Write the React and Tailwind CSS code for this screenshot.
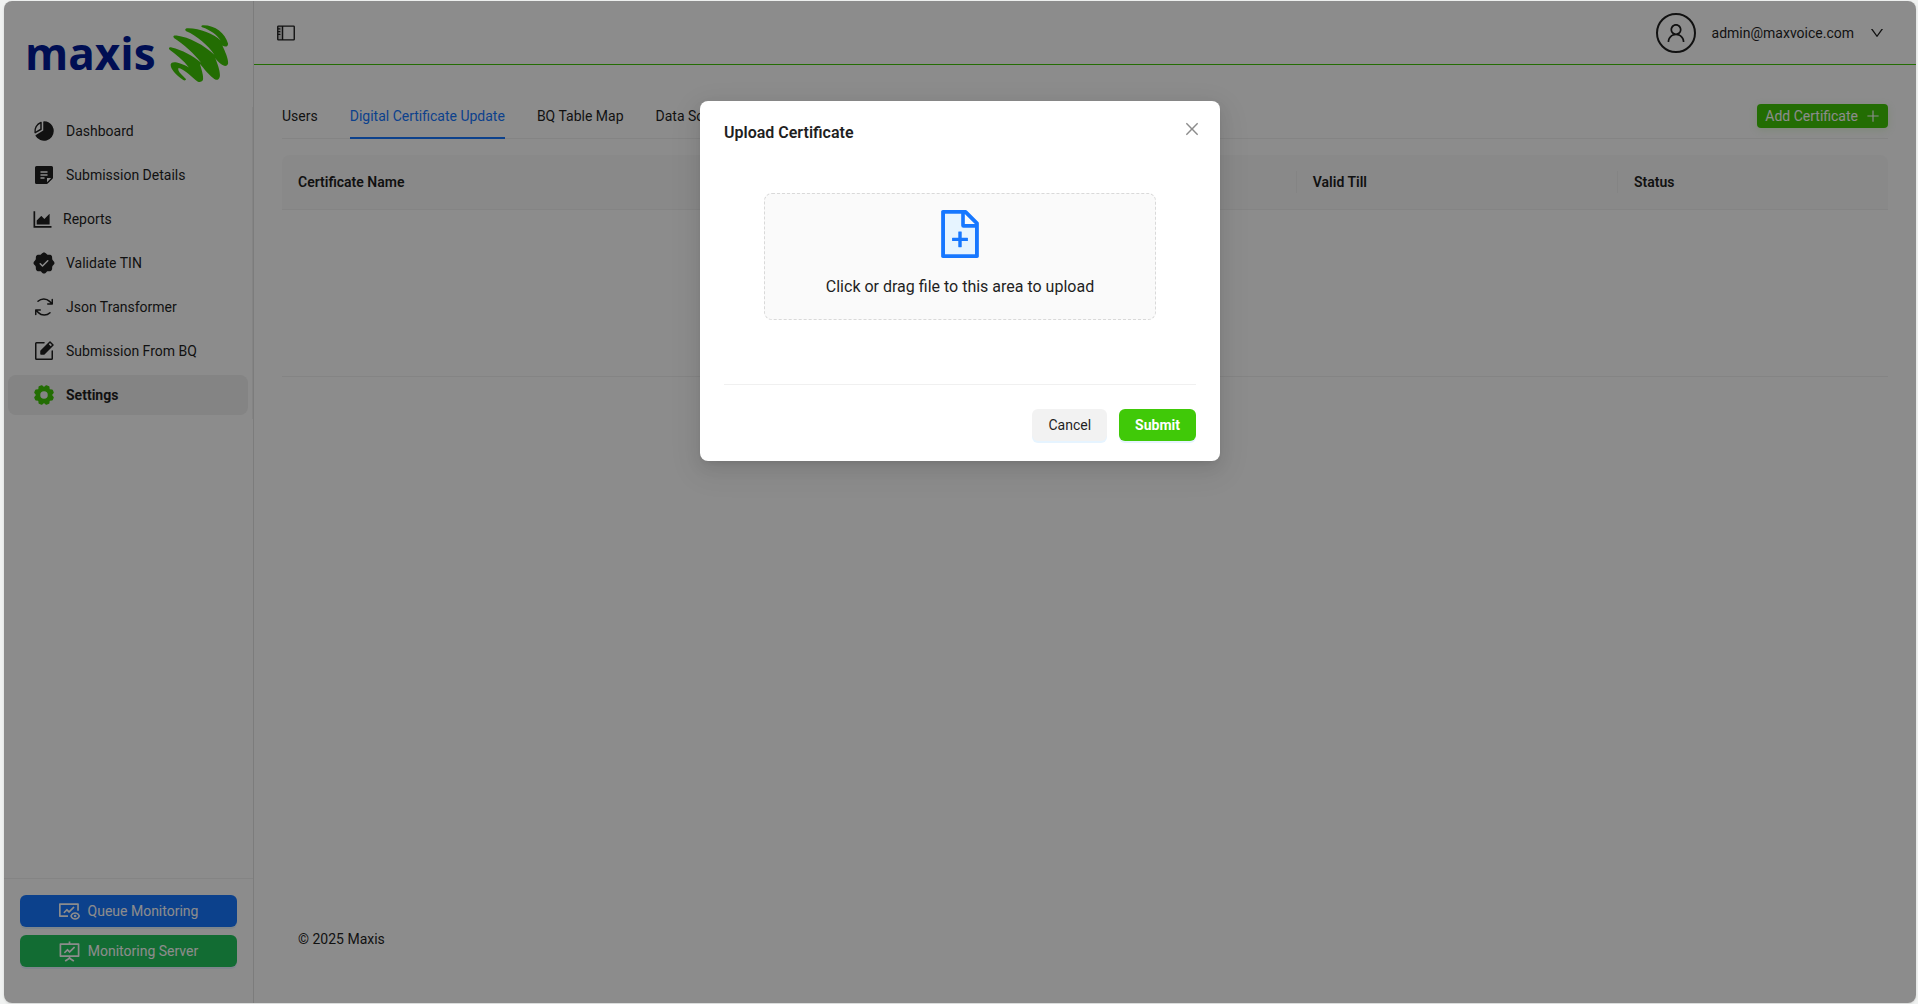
import React from "react";
import {
  PiChartPieSliceFill,
  PiNoteFill,
  PiSealCheckFill,
  PiArrowsClockwise,
  PiNotePencilFill,
  PiGearFill,
  PiSidebarDuotone,
} from "react-icons/pi";
import {
  AiOutlineAreaChart,
  AiOutlineFundView,
  AiOutlineFundProjectionScreen,
  AiOutlineUser,
  AiOutlineDown,
  AiOutlinePlus,
  AiOutlineClose,
} from "react-icons/ai";

// Ant icons fill their box when drawn in this tighter view box.
const ANT_BOX = "64 64 896 896";

const menu = [
  { label: "Dashboard", icon: <PiChartPieSliceFill size={24} /> },
  { label: "Submission Details", icon: <PiNoteFill size={24} /> },
  { label: "Reports", icon: <AiOutlineAreaChart size={21} viewBox={ANT_BOX} /> },
  { label: "Validate TIN", icon: <PiSealCheckFill size={24} /> },
  { label: "Json Transformer", icon: <PiArrowsClockwise size={24} /> },
  { label: "Submission From BQ", icon: <PiNotePencilFill size={24} /> },
  { label: "Settings", icon: <PiGearFill size={24} className="text-[#40c706]" />, active: true },
];

const tabs = ["Users", "Digital Certificate Update", "BQ Table Map", "Data Source"];

function Logo() {
  return (
    <a href="#home" className="flex h-[106px] items-center justify-between pr-6 pb-0.5 pl-[21px]">
      <span className="font-['Open_Sans',sans-serif] text-[44px] leading-[60px] font-bold text-[#001a98]">
        maxis
      </span>
      <svg viewBox="503 72 184 176" className="h-[59px] w-[61px] shrink-0 fill-[#40c706]" aria-hidden="true">
        <path d="M607 75C645 74 675 98 684 130C685 139 676 142 667 136C677 158 686 178 684 191C681 199 673 199 666 194C657 189 650 181 645 173C654 195 662 219 659 231C656 241 647 242 640 235C628 226 612 207 599 191C606 213 611 230 608 241C602 249 593 247 586 240C568 224 548 207 535 204C530 212 543 223 557 237C558 241 553 243 549 240C525 224 510 206 511 193C514 183 532 184 566 202C550 181 527 163 508 149C503 144 508 140 514 142C545 149 579 167 603 188C584 162 550 132 521 113C516 107 522 104 529 106C567 111 612 135 643 164C625 136 590 106 558 93C552 88 556 83 564 84C600 85 641 101 662 121C651 104 631 89 606 81C602 79 603 76 607 75Z" />
      </svg>
    </a>
  );
}

function Sidebar() {
  return (
    <aside className="flex w-[250px] shrink-0 flex-col border-r border-[#e2e2e2]">
      <Logo />
      <nav className="flex flex-col gap-1 border-r border-[#f0f0f0] p-1">
        {menu.map((m) => (
          <a
            key={m.label}
            href={"#" + m.label.toLowerCase().replaceAll(" ", "-")}
            className={
              m.active
                ? "flex h-10 items-center gap-2.5 rounded-lg bg-[#f0f0f0] pl-6 font-bold"
                : "flex h-10 items-center gap-2.5 rounded-lg pl-6"
            }
          >
            {m.icon}
            {m.label}
          </a>
        ))}
      </nav>
      <div className="mt-auto flex flex-col gap-2 border-t border-[#f0f0f0] px-4 pt-4 pb-9">
        <button className="flex h-8 items-center justify-center gap-2 rounded-md bg-[#1677ff] text-white shadow-[0_2px_0_rgba(5,145,255,0.1)]">
          <AiOutlineFundView size={21} viewBox={ANT_BOX} />
          Queue Monitoring
        </button>
        <button className="flex h-8 items-center justify-center gap-2 rounded-md bg-[#22c55e] text-white shadow-[0_2px_0_rgba(5,145,255,0.1)]">
          <AiOutlineFundProjectionScreen size={21} viewBox={ANT_BOX} />
          Monitoring Server
        </button>
      </div>
    </aside>
  );
}

function Header() {
  return (
    <header className="flex h-16 items-center justify-between border-b border-[#40c706] pr-8 pl-[21px]">
      <button aria-label="Toggle sidebar">
        <PiSidebarDuotone size={22} />
      </button>
      <button className="flex items-center gap-4">
        <span className="flex size-10 items-center justify-center rounded-full border-2 border-current">
          <AiOutlineUser size={20} viewBox={ANT_BOX} />
        </span>
        admin@maxvoice.com
        <AiOutlineDown size={14} viewBox={ANT_BOX} />
      </button>
    </header>
  );
}

function Content() {
  return (
    <main className="px-7 pt-7">
      <div className="flex items-start justify-between border-b border-[#f0f0f0]">
        <div role="tablist" className="-mb-px flex gap-8">
          {tabs.map((t, i) => (
            <button
              key={t}
              role="tab"
              aria-selected={i === 1}
              className={
                i === 1
                  ? "border-b-2 border-[#1677ff] pt-3 pb-2.5 text-[#1677ff]"
                  : "border-b-2 border-transparent pt-3 pb-2.5"
              }
            >
              {t}
            </button>
          ))}
        </div>
        <button className="mt-[11px] flex h-6 items-center gap-2 rounded bg-[#40c706] px-2 text-white shadow-[0_2px_8px_rgba(64,199,6,0.15)]">
          Add Certificate
          <AiOutlinePlus size={14} viewBox={ANT_BOX} />
        </button>
      </div>
      <table className="mt-4 w-full table-fixed border-separate border-spacing-0 text-left">
        <colgroup>
          <col />
          <col className="w-[20%]" />
          <col className="w-[20%]" />
          <col className="w-[270px]" />
        </colgroup>
        <thead>
          <tr>
            {["Certificate Name", "", "Valid Till", "Status"].map((h, i) => (
              <th
                key={i}
                className="border-b border-[#f0f0f0] bg-[#fafafa] py-4 font-semibold first:rounded-tl-lg last:rounded-tr-lg"
              >
                <div className={i < 3 ? "h-[22px] border-r border-[#f0f0f0] px-4" : "h-[22px] px-4"}>{h}</div>
              </th>
            ))}
          </tr>
        </thead>
        <tbody>
          <tr>
            <td colSpan={4} className="h-[167px] border-b border-[#f0f0f0]" />
          </tr>
        </tbody>
      </table>
    </main>
  );
}

function UploadDialog() {
  return (
    <div className="absolute inset-0 flex items-start justify-center bg-black/45 pt-25">
      <section
        role="dialog"
        aria-labelledby="upload-title"
        className="relative w-[520px] rounded-lg bg-white px-6 py-5 shadow-[0_6px_16px_rgba(0,0,0,0.08),0_3px_6px_-4px_rgba(0,0,0,0.12),0_9px_28px_8px_rgba(0,0,0,0.05)]"
      >
        <h2 id="upload-title" className="text-base leading-6 font-semibold">
          Upload Certificate
        </h2>
        <button aria-label="Close" className="absolute top-5 right-5 text-black/45">
          <AiOutlineClose size={16} viewBox={ANT_BOX} />
        </button>
        <button className="mx-10 mt-12 flex w-[392px] flex-col items-center gap-[17px] rounded-lg border border-dashed border-[#d9d9d9] bg-[#fafafa] pt-4 pb-5 text-base leading-6">
          <svg viewBox={ANT_BOX} className="size-12" aria-hidden="true">
            <path className="fill-[#e6f4ff]" d="M534 352V136H232v752h560V394H576a42 42 0 0 1-42-42z" />
            <path
              className="fill-[#1677ff]"
              d="M854.600 288.600 639.400 73.400c-6-6-14.100-9.400-22.600-9.400H192c-17.700 0-32 14.300-32 32v832c0 17.700 14.300 32 32 32h640c17.700 0 32-14.300 32-32V311.300c0-8.500-3.400-16.700-9.400-22.700zM602 137.800 790.200 326H602V137.800zM792 888H232V136h302v216a42 42 0 0 0 42 42h216v494z"
            />
            <path
              className="fill-[#1677ff]"
              d="M544 472c0-4.400-3.600-8-8-8h-48c-4.400 0-8 3.600-8 8v108H372c-4.400 0-8 3.600-8 8v48c0 4.400 3.600 8 8 8h108v108c0 4.400 3.600 8 8 8h48c4.400 0 8-3.600 8-8V644h108c4.400 0 8-3.600 8-8v-48c0-4.400-3.600-8-8-8H544V472z"
            />
          </svg>
          Click or drag file to this area to upload
        </button>
        <footer className="mt-16 flex justify-end gap-3 border-t border-[#f0f0f0] pt-6">
          <button className="h-8 rounded-md bg-[#f2f2f2] px-4 shadow-[0_2px_0_#e6f4ff]">Cancel</button>
          <button className="h-8 rounded-md bg-[#40c908] px-4 font-bold text-white shadow-[0_2px_0_#e6f4ff]">
            Submit
          </button>
        </footer>
      </section>
    </div>
  );
}

export default function App() {
  return (
    <div className="flex h-screen bg-[#f0f2f1] pt-px pr-0.5 pb-px pl-1 font-[Roboto,sans-serif] text-sm leading-[22px] text-[#1f1f1f]">
      <div className="relative flex flex-1 overflow-hidden rounded-lg bg-white shadow-sm">
        <Sidebar />
        <div className="flex min-w-0 flex-1 flex-col">
          <Header />
          <Content />
          <footer className="mt-auto px-11 pb-[53px]">© 2025 Maxis</footer>
        </div>
        <UploadDialog />
      </div>
    </div>
  );
}
